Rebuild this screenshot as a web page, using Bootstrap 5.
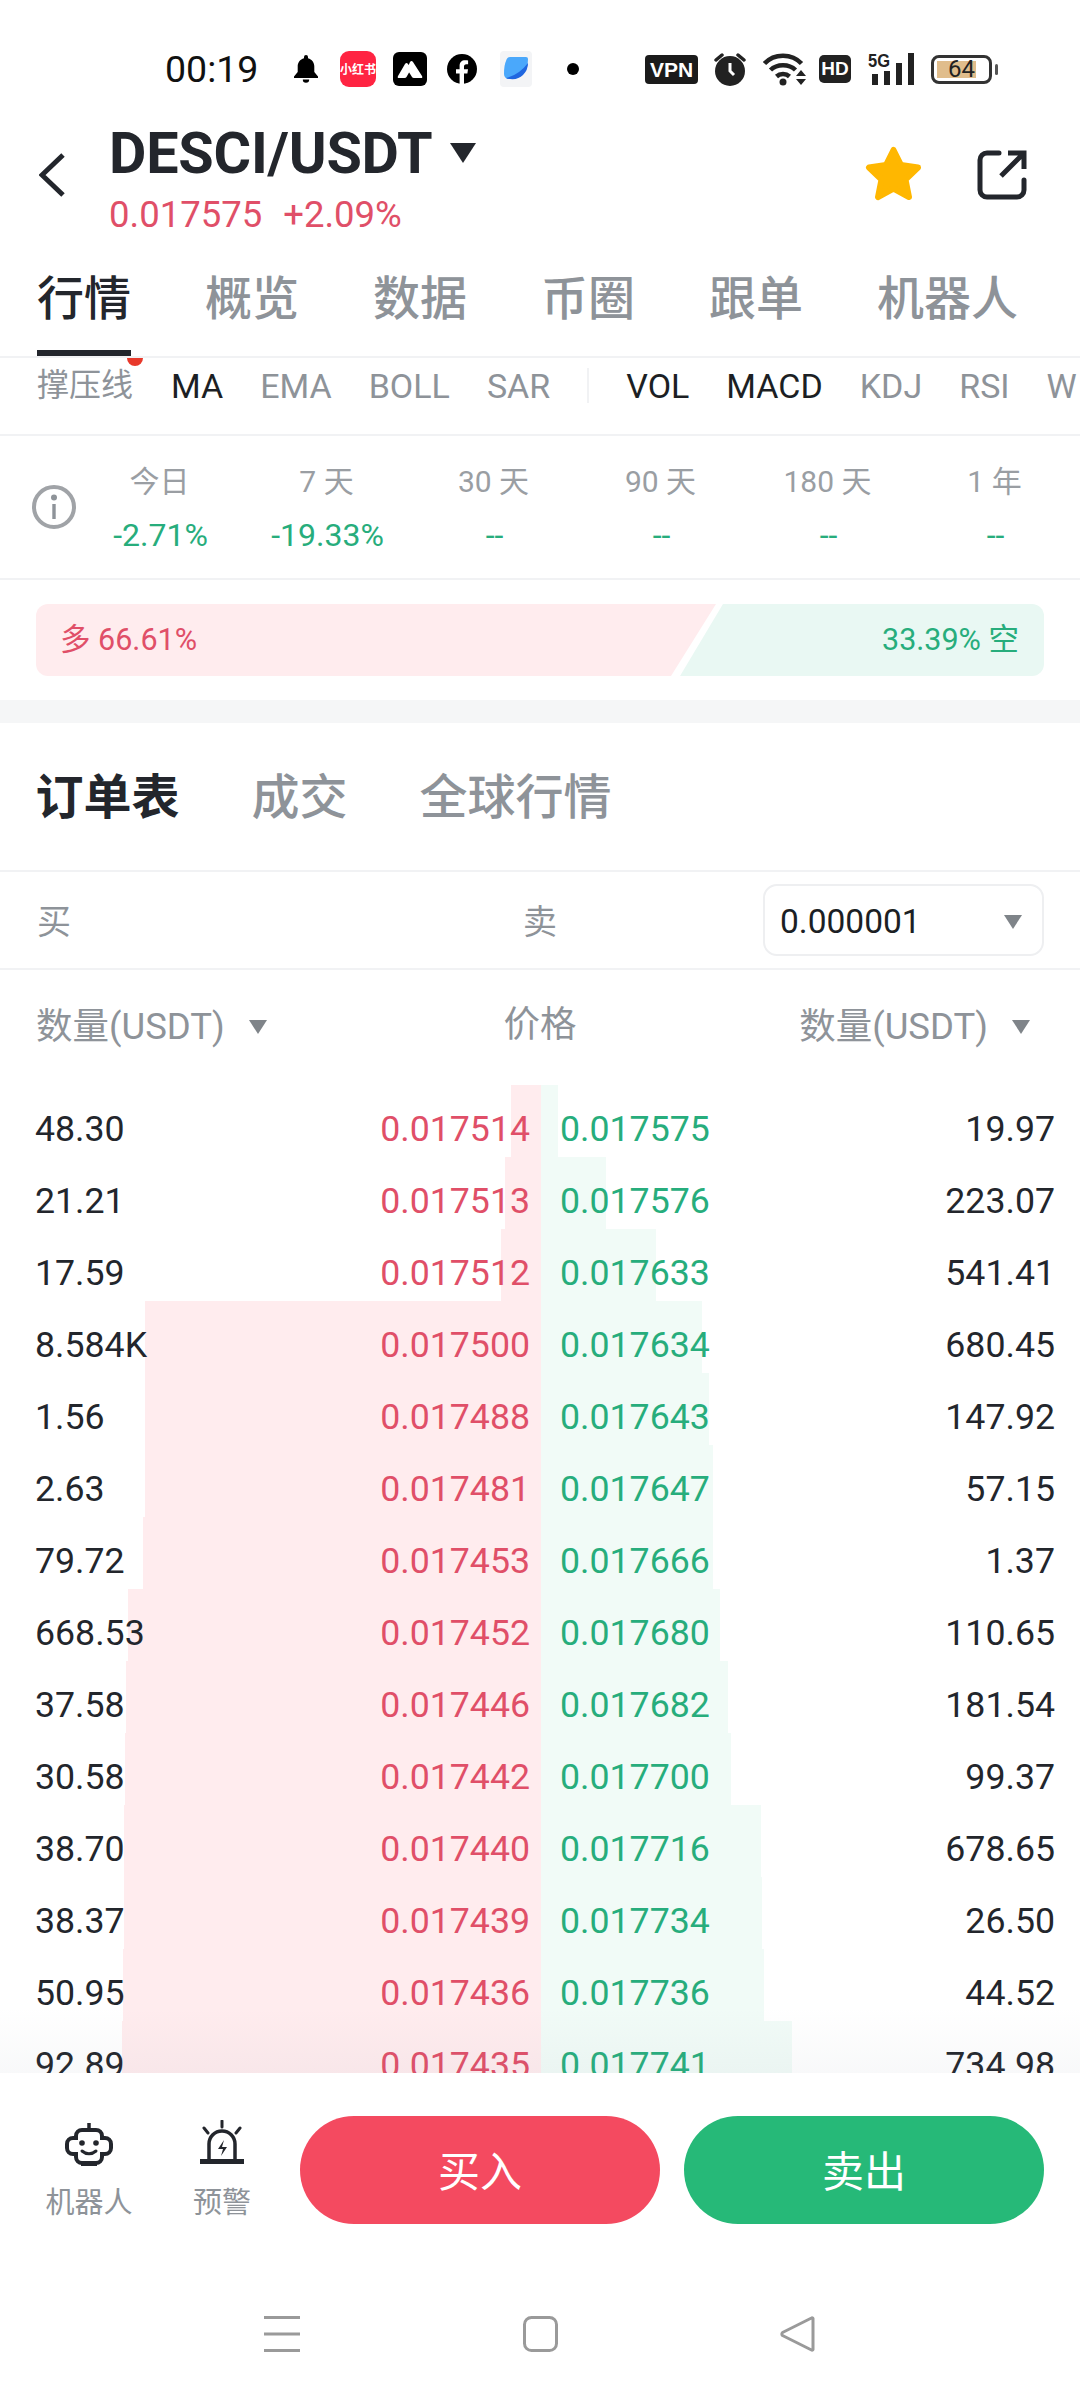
<!DOCTYPE html>
<html lang="zh">
<head>
<meta charset="utf-8">
<title>DESCI/USDT</title>
<link href="https://cdn.jsdelivr.net/npm/bootstrap@5.3.0/dist/css/bootstrap.min.css" rel="stylesheet">
<style>
:root{--ink:#23262c;--mute:#8e9399;--up:#e04f68;--down:#27ad7c;--line:#f1f2f4;}
html,body{margin:0;background:#fff;}
body{width:1080px;height:2400px;overflow:hidden;font-family:Roboto,"Noto Sans CJK SC",sans-serif;color:var(--ink);}
.pg{height:2400px;}
.st{height:120px;padding:18px 0 0 165px;}
.st-time{font-size:37.500px;line-height:40px;color:#111;width:93px;white-space:nowrap;}
.st-bell{margin-left:36px;}
.st-red{width:36px;height:36px;border-radius:9px;background:#ff2442;color:#fff;font:700 12px/36px "Noto Sans CJK SC",sans-serif;text-align:center;margin-left:22px;white-space:nowrap;}
.st-black{width:34px;height:34px;border-radius:6px;background:#000;margin-left:17px;}
.st-fb{margin-left:20px;}
.st-planet{margin-left:23px;}
.st-dot{margin-left:35px;}
.st-vpn{width:53px;height:29px;border-radius:4px;background:#1b1b1b;color:#fff;font:700 21px/29px "Liberation Sans",sans-serif;text-align:center;margin-left:66px;}
.st-clock{margin-left:16px;}
.st-wifi{margin-left:17px;}
.st-hd{width:32px;height:28px;border-radius:5px;background:#222;color:#fff;font:700 19px/28px "Liberation Sans",sans-serif;text-align:center;margin-left:12px;}
.st-sig{margin-left:17px;}
.st-batt{width:61px;height:29px;border:3px solid #333;border-radius:8px;margin-left:17px;color:#222;font-size:24px;line-height:23px;text-align:center;background:linear-gradient(#e0bd8c,#e0bd8c) 3px 3px/39px 17px no-repeat;}
.st-nub{width:3px;height:11px;background:#555;margin-left:3px;border-radius:2px;}
.hd{height:142px;padding:0 53px 0 39px;}
.hd-back{width:26px;margin-top:33px;flex:none;}
.hd-mid{margin-left:44px;}
.hd-title{font-size:57.500px;line-height:68px;font-weight:700;color:var(--ink);white-space:nowrap;letter-spacing:-.2px;}
.hd-price{font-size:36.500px;line-height:54px;color:var(--up);white-space:nowrap;}
.hd-price span+span{margin-left:21px;}
.hd-tri{margin-left:18px;margin-top:23px;flex:none;}
.hd-star{margin:26px 0 0 auto;flex:none;}
.hd-share{margin:30px 0 0 55px;flex:none;}
.tb{height:96px;border-bottom:2px solid var(--line);padding-left:37px;gap:74px;}
.tb-i{font-size:47px;line-height:74px;height:94px;color:var(--mute);font-weight:500;white-space:nowrap;border-bottom:6px solid transparent;padding-bottom:14px;}
.tb-on{color:var(--ink);border-bottom-color:#23262c;}
.ind{height:78px;border-bottom:2px solid var(--line);padding-left:37px;gap:37px;font-size:34px;line-height:56px;color:var(--mute);overflow:hidden;white-space:nowrap;position:relative;}
.ind::before{content:"";position:absolute;left:127px;top:-8px;width:16px;height:16px;border-radius:50%;background:#e8392b;}
.ind-on{color:#1c1f24;}
.ind-cjk{font-size:32px;line-height:54px;margin-right:1px;}
.ind-sep{width:2px;height:35px;background:var(--line);margin-top:10px;flex:none;}
.stat{height:144px;border-bottom:2px solid var(--line);}
.stat-ic{width:44px;height:44px;border:4px solid #a0a3a7;border-radius:50%;margin:49px 0 0 32px;flex:none;color:#8e9399;}
.stat-c{width:167px;text-align:center;padding-top:26px;flex:none;white-space:nowrap;}
.stat-l{font-size:30px;line-height:40px;color:#9a9ea3;}
.stat-v{font-size:32px;line-height:40px;color:var(--down);margin-top:13px;padding-left:2px;}
.ls-w{height:120px;padding:24px 36px;}
.ls{height:72px;border-radius:12px;overflow:hidden;}
.ls-a{width:680px;background:#ffecee;color:var(--up);clip-path:polygon(0 0,100% 0,calc(100% - 45px) 100%,0 100%);padding-left:24px;flex:none;}
.ls-b{flex:1 1 auto;margin-left:-36px;background:#e9f8f3;color:var(--down);clip-path:polygon(43px 0,100% 0,100% 100%,0 100%);padding-right:25px;text-align:right;}
.ls-a,.ls-b{font-size:30.500px;line-height:72px;white-space:nowrap;}
.band{height:23px;background:#f5f6f7;}
.ot{height:149px;border-bottom:2px solid var(--line);padding:2px 0 0 35.500px;gap:72px;font-size:48px;color:var(--mute);font-weight:500;}
.ot-on{color:var(--ink);font-weight:700;}
.bs{height:98px;border-bottom:2px solid var(--line);font-size:34px;color:var(--mute);padding-left:37px;}
.bs-a{width:486px;padding-top:4px;}
.bs-b{width:240px;padding-top:4px;}
.bs-sel{width:281px;height:72px;border:2px solid #eeeff1;border-radius:14px;padding:4px 20px 0 15px;font-size:33.500px;color:#1c1f24;}
.cols{height:115px;padding:27px 36px 0 36px;display:grid;grid-template-columns:1fr auto 1fr;font-size:36.500px;line-height:56px;color:var(--mute);white-space:nowrap;}
.cols i{display:inline-block;margin-left:24px;vertical-align:2px;}
.cols-r{padding-right:14px;}
.book{flex:1 1 0;min-height:0;overflow:hidden;}
.bk{height:72px;font-size:35.700px;}
.bk-l,.bk-r{height:72px;padding-top:18px;white-space:nowrap;}
.bk-l{width:541px;padding-left:35px;padding-right:11px;color:var(--ink);background:linear-gradient(#ffecee,#ffecee) right top/var(--d) 100% no-repeat;}
.bk-r{width:539px;padding-left:19px;padding-right:25px;color:var(--ink);background:linear-gradient(#f1fbf7,#f1fbf7) left top/var(--d) 100% no-repeat;}
.bk-up{color:var(--up);}
.bk-dn{color:var(--down);}
.ft{height:327px;background:#fff;position:relative;}
.ft::before{content:"";position:absolute;left:0;right:0;top:-65px;height:65px;background:linear-gradient(rgba(120,130,150,0),rgba(120,130,150,.05));}
.ft-top{height:151px;padding:43px 36px 0 0;}
.ft-ic{font-size:29px;line-height:40px;color:#8e9399;text-align:center;white-space:nowrap;}
.ft-ic svg{display:block;margin:0 auto;}
.ft-ic1{width:88px;margin-left:45px;margin-top:6px;}
.ft-ic2{width:58px;margin-left:60px;margin-top:4px;}
.ft-ic span{display:block;margin-top:17px;}
.ft-btn{height:108px;width:360px;border-radius:54px;border:0;color:#fff;font-size:42px;padding:5px 0 0;}
.ft-buy{background:#f44a60;margin-left:49px;}
.ft-sell{background:#26b978;margin-left:24px;}
.nv{height:176px;padding-top:92px;}
.nv-m{margin-left:264px;}
.nv-s{margin-left:223px;}
.nv-t{margin-left:222px;}
</style>
</head>
<body>
<div class="pg d-flex flex-column">

<div class="st d-flex align-items-center flex-shrink-0">
  <div class="st-time">00:19</div>
  <svg class="st-bell" width="24" height="28" viewBox="0 0 24 28"><path fill="#000" d="M12 0a2 2 0 0 1 2 2v1.200c4 1 6.300 4.300 6.300 8.300v5.500L24 21.500V23H0v-1.500L3.700 17v-5.500c0-4 2.300-7.300 6.300-8.300V2a2 2 0 0 1 2-2zM8.800 24.500h6.400a3.200 3.200 0 0 1-6.400 0z"/></svg>
  <div class="st-red">小红书</div>
  <div class="st-black d-flex align-items-center justify-content-center"><svg width="26" height="20" viewBox="0 0 26 20"><path fill="#fff" d="M1 17 8 5q1.500-2 3 0l3 5-4.500 8q-.5 1-2 1H2q-2 0-1-2zM13 3q1.500-2 3 0l9 14q1 2-1 2h-7q-1.500 0-2-1l-5-8z"/></svg></div>
  <svg class="st-fb" width="30" height="30" viewBox="0 0 30 30"><circle cx="15" cy="15" r="15" fill="#000"/><path fill="#fff" d="M12.600 30V19.500H9v-4.300h3.600V12c0-3.700 2.200-5.700 5.500-5.700 1.600 0 3 .2 3 .2v3.700h-1.700c-1.800 0-2.400 1.100-2.400 2.300v2.700h4l-.6 4.300h-3.400V30z"/></svg>
  <svg class="st-planet" width="32" height="36" viewBox="0 0 32 36"><rect width="32" height="36" rx="4" fill="#f3f4f6"/><path fill="#4aa8fb" d="M10 6h16q2 0 2 2 0 10-5 15-5 5-13 5-6 0-6-5 0-9 2-13 1-4 4-4z"/><path fill="#1f66e0" d="M28 12q0 7-5 12t-13 4q-3 0-4-1 13-3 22-15z"/></svg>
  <svg class="st-dot" width="12" height="12" viewBox="0 0 12 12"><circle cx="6" cy="6" r="6" fill="#000"/></svg>
  <div class="st-vpn">VPN</div>
  <svg class="st-clock" width="32" height="34" viewBox="0 0 32 34"><circle cx="16" cy="19" r="15" fill="#222"/><path d="M16 11v8l4 4" fill="none" stroke="#fff" stroke-width="3"/><path d="M2 8 8 3M30 8 24 3" stroke="#222" stroke-width="3.500" stroke-linecap="round"/></svg>
  <svg class="st-wifi" width="44" height="34" viewBox="0 0 44 34"><g fill="none" stroke="#222" stroke-width="4.500"><path d="M1.500 11.500C11 1 29 1 38.500 11.500"/><path d="M7.500 18C14 11.500 26 11.500 32.500 18"/><path d="M13.500 24.500c3.500-3.200 9.500-3.200 13 0"/></g><circle cx="20" cy="30" r="3.500" fill="#222"/><path fill="#222" d="m38 18 5 6H33zM33 27h10l-5 6z"/></svg>
  <div class="st-hd">HD</div>
  <svg class="st-sig" width="46" height="34" viewBox="0 0 46 34"><text x="0" y="15" font-family="Liberation Sans" font-weight="700" font-size="18" textLength="22" lengthAdjust="spacingAndGlyphs" fill="#222">5G</text><g fill="#222"><rect x="4" y="22" width="6" height="11"/><rect x="16" y="19" width="6" height="14"/><rect x="28" y="11" width="6" height="22"/><rect x="40" y="1" width="6" height="32"/></g></svg>
  <div class="st-batt">64</div>
  <div class="st-nub"></div>
</div>

<div class="hd d-flex flex-shrink-0">
  <svg class="hd-back" width="26" height="44" viewBox="0 0 26 44"><path d="M24 2 3 22l21 20" fill="none" stroke="#23262c" stroke-width="5"/></svg>
  <div class="hd-mid">
    <div class="d-flex"><div class="hd-title">DESCI/USDT</div><svg class="hd-tri" width="26" height="20" viewBox="0 0 26 20"><path d="M0 0h26L13 20z" fill="#23262c"/></svg></div>
    <div class="hd-price"><span>0.017575</span><span>+2.09%</span></div>
  </div>
  <svg class="hd-star" width="57" height="55" viewBox="0 0 57 55"><path fill="#ffb700" stroke="#ffb700" stroke-width="6" stroke-linejoin="round" d="M28.500 4 36 19l17 2.500-12.500 12L44 51 28.500 42.500 13 51l3.500-17.500L4 21.500 21 19z"/></svg>
  <svg class="hd-share" width="50" height="50" viewBox="0 0 50 50"><path d="M22 3H10a7 7 0 0 0-7 7v30a7 7 0 0 0 7 7h30a7 7 0 0 0 7-7V30" fill="none" stroke="#23262c" stroke-width="5" stroke-linecap="round"/><path d="M24 26 47 3M31 3h16v16" fill="none" stroke="#23262c" stroke-width="5"/></svg>
</div>

<div class="tb d-flex flex-shrink-0">
  <div class="tb-i tb-on">行情</div><div class="tb-i">概览</div><div class="tb-i">数据</div><div class="tb-i">币圈</div><div class="tb-i">跟单</div><div class="tb-i">机器人</div>
</div>

<div class="ind d-flex flex-shrink-0">
  <span class="ind-cjk">撑压线</span><span class="ind-on">MA</span><span>EMA</span><span>BOLL</span><span>SAR</span><span class="ind-sep"></span><span class="ind-on">VOL</span><span class="ind-on">MACD</span><span>KDJ</span><span>RSI</span><span>W</span>
</div>

<div class="stat d-flex flex-shrink-0">
  <div class="stat-ic d-flex align-items-center justify-content-center"><svg width="8" height="26" viewBox="0 0 8 26"><circle cx="4" cy="3.500" r="3" fill="#8e9399"/><rect x="2.300" y="10" width="3.400" height="15" fill="#8e9399"/></svg></div>
  <div class="stat-c"><div class="stat-l">今日</div><div class="stat-v">-2.71%</div></div>
  <div class="stat-c"><div class="stat-l">7 天</div><div class="stat-v">-19.33%</div></div>
  <div class="stat-c"><div class="stat-l">30 天</div><div class="stat-v">--</div></div>
  <div class="stat-c"><div class="stat-l">90 天</div><div class="stat-v">--</div></div>
  <div class="stat-c"><div class="stat-l">180 天</div><div class="stat-v">--</div></div>
  <div class="stat-c"><div class="stat-l">1 年</div><div class="stat-v">--</div></div>
</div>

<div class="ls-w flex-shrink-0">
  <div class="ls d-flex">
    <div class="ls-a">多 66.61%</div>
    <div class="ls-b">33.39% 空</div>
  </div>
</div>

<div class="band flex-shrink-0"></div>

<div class="ot d-flex align-items-center flex-shrink-0">
  <div class="ot-on">订单表</div><div>成交</div><div>全球行情</div>
</div>

<div class="bs d-flex align-items-center flex-shrink-0">
  <div class="bs-a">买</div><div class="bs-b">卖</div>
  <div class="bs-sel d-flex align-items-center justify-content-between"><span>0.000001</span><svg width="18" height="14" viewBox="0 0 18 14"><path d="M0 0h18L9 14z" fill="#7f8489"/></svg></div>
</div>

<div class="cols flex-shrink-0">
  <div>数量(USDT)<i><svg width="18" height="14" viewBox="0 0 18 14"><path d="M0 0h18L9 14z" fill="#7f8489"/></svg></i></div>
  <div>价格</div>
  <div class="text-end cols-r">数量(USDT)<i><svg width="18" height="14" viewBox="0 0 18 14"><path d="M0 0h18L9 14z" fill="#7f8489"/></svg></i></div>
</div>

<div class="book">
  <div class="bk d-flex"><div class="bk-l d-flex justify-content-between" style="--d:30px"><span>48.30</span><span class="bk-up">0.017514</span></div><div class="bk-r d-flex justify-content-between" style="--d:17px"><span class="bk-dn">0.017575</span><span>19.97</span></div></div>
  <div class="bk d-flex"><div class="bk-l d-flex justify-content-between" style="--d:36px"><span>21.21</span><span class="bk-up">0.017513</span></div><div class="bk-r d-flex justify-content-between" style="--d:65px"><span class="bk-dn">0.017576</span><span>223.07</span></div></div>
  <div class="bk d-flex"><div class="bk-l d-flex justify-content-between" style="--d:40px"><span>17.59</span><span class="bk-up">0.017512</span></div><div class="bk-r d-flex justify-content-between" style="--d:115px"><span class="bk-dn">0.017633</span><span>541.41</span></div></div>
  <div class="bk d-flex"><div class="bk-l d-flex justify-content-between" style="--d:396px"><span>8.584K</span><span class="bk-up">0.017500</span></div><div class="bk-r d-flex justify-content-between" style="--d:161px"><span class="bk-dn">0.017634</span><span>680.45</span></div></div>
  <div class="bk d-flex"><div class="bk-l d-flex justify-content-between" style="--d:396px"><span>1.56</span><span class="bk-up">0.017488</span></div><div class="bk-r d-flex justify-content-between" style="--d:168px"><span class="bk-dn">0.017643</span><span>147.92</span></div></div>
  <div class="bk d-flex"><div class="bk-l d-flex justify-content-between" style="--d:396px"><span>2.63</span><span class="bk-up">0.017481</span></div><div class="bk-r d-flex justify-content-between" style="--d:172px"><span class="bk-dn">0.017647</span><span>57.15</span></div></div>
  <div class="bk d-flex"><div class="bk-l d-flex justify-content-between" style="--d:398px"><span>79.72</span><span class="bk-up">0.017453</span></div><div class="bk-r d-flex justify-content-between" style="--d:172px"><span class="bk-dn">0.017666</span><span>1.37</span></div></div>
  <div class="bk d-flex"><div class="bk-l d-flex justify-content-between" style="--d:413px"><span>668.53</span><span class="bk-up">0.017452</span></div><div class="bk-r d-flex justify-content-between" style="--d:179px"><span class="bk-dn">0.017680</span><span>110.65</span></div></div>
  <div class="bk d-flex"><div class="bk-l d-flex justify-content-between" style="--d:415px"><span>37.58</span><span class="bk-up">0.017446</span></div><div class="bk-r d-flex justify-content-between" style="--d:187px"><span class="bk-dn">0.017682</span><span>181.54</span></div></div>
  <div class="bk d-flex"><div class="bk-l d-flex justify-content-between" style="--d:416px"><span>30.58</span><span class="bk-up">0.017442</span></div><div class="bk-r d-flex justify-content-between" style="--d:190px"><span class="bk-dn">0.017700</span><span>99.37</span></div></div>
  <div class="bk d-flex"><div class="bk-l d-flex justify-content-between" style="--d:417px"><span>38.70</span><span class="bk-up">0.017440</span></div><div class="bk-r d-flex justify-content-between" style="--d:220px"><span class="bk-dn">0.017716</span><span>678.65</span></div></div>
  <div class="bk d-flex"><div class="bk-l d-flex justify-content-between" style="--d:417px"><span>38.37</span><span class="bk-up">0.017439</span></div><div class="bk-r d-flex justify-content-between" style="--d:221px"><span class="bk-dn">0.017734</span><span>26.50</span></div></div>
  <div class="bk d-flex"><div class="bk-l d-flex justify-content-between" style="--d:418px"><span>50.95</span><span class="bk-up">0.017436</span></div><div class="bk-r d-flex justify-content-between" style="--d:223px"><span class="bk-dn">0.017736</span><span>44.52</span></div></div>
  <div class="bk d-flex"><div class="bk-l d-flex justify-content-between" style="--d:419px"><span>92.89</span><span class="bk-up">0.017435</span></div><div class="bk-r d-flex justify-content-between" style="--d:251px"><span class="bk-dn">0.017741</span><span>734.98</span></div></div>
</div>

<div class="ft flex-shrink-0">
  <div class="ft-top d-flex align-items-start">
    <div class="ft-ic ft-ic1">
      <svg width="48" height="44" viewBox="0 0 48 44"><path d="M24 1v7" stroke="#23262c" stroke-width="3.500"/><path d="M11 14a6 6 0 0 1 6-6h14a6 6 0 0 1 6 6v2h3a6 6 0 0 1 6 6v4a6 6 0 0 1-6 6h-3v3a6 6 0 0 1-6 6H17a6 6 0 0 1-6-6v-3H8a6 6 0 0 1-6-6v-4a6 6 0 0 1 6-6h3z" fill="none" stroke="#23262c" stroke-width="4"/><circle cx="17" cy="21" r="2.800" fill="#23262c"/><circle cx="31" cy="21" r="2.800" fill="#23262c"/><path d="M17 29c4 3.500 10 3.500 14 0" fill="none" stroke="#23262c" stroke-width="3" stroke-linecap="round"/><path d="M16 42h16" stroke="#23262c" stroke-width="4"/></svg>
      <span>机器人</span>
    </div>
    <div class="ft-ic ft-ic2">
      <svg width="44" height="46" viewBox="0 0 44 46"><path d="M9 39V24a13 13 0 0 1 26 0v15" fill="none" stroke="#23262c" stroke-width="3.500"/><path d="M0 40h44v5H0z" fill="#23262c" transform="translate(0 -1)"/><path d="M22 1v6M4 8l4 5M40 8l-4 5" stroke="#23262c" stroke-width="3" stroke-linecap="round"/><path d="M24 20l-6 9h5l-2 7 6-9h-5z" fill="#23262c"/></svg>
      <span>预警</span>
    </div>
    <button class="btn ft-btn ft-buy" type="button">买入</button>
    <button class="btn ft-btn ft-sell" type="button">卖出</button>
  </div>
  <div class="nv d-flex align-items-start">
    <svg class="nv-m" width="36" height="36" viewBox="0 0 36 36"><path d="M0 1.500h36M0 18h36M0 34.500h36" stroke="#9a9a9a" stroke-width="3"/></svg>
    <svg class="nv-s" width="35" height="36" viewBox="0 0 35 36"><rect x="1.500" y="1.500" width="32" height="33" rx="7" fill="none" stroke="#9a9a9a" stroke-width="3"/></svg>
    <svg class="nv-t" width="35" height="36" viewBox="0 0 35 36"><path d="M33 2.500a1 1 0 0 0-1.500-.5L2.500 16.500a2 2 0 0 0 0 3L31.500 34a1 1 0 0 0 1.500-.5z" fill="none" stroke="#9a9a9a" stroke-width="3" stroke-linejoin="round"/></svg>
  </div>
</div>

</div>
</body>
</html>
